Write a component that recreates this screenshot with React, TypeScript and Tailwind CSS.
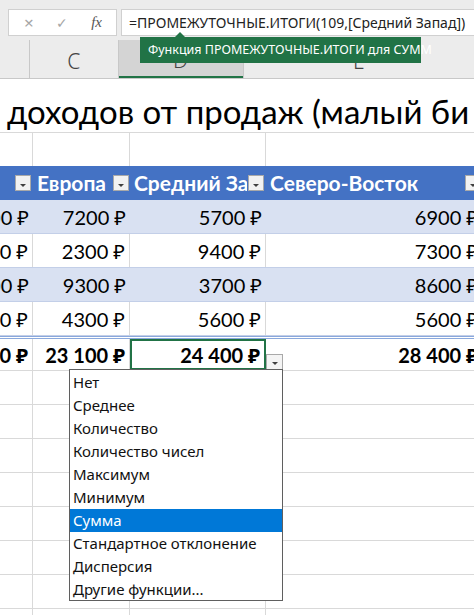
import React from 'react';
import clsx from 'clsx';

const rows = [
  { b: '6100 ₽', c: '7200 ₽', d: '5700 ₽', e: '6900 ₽', band: true },
  { b: '8200 ₽', c: '2300 ₽', d: '9400 ₽', e: '7300 ₽', band: false },
  { b: '5400 ₽', c: '9300 ₽', d: '3700 ₽', e: '8600 ₽', band: true },
  { b: '3800 ₽', c: '4300 ₽', d: '5600 ₽', e: '5600 ₽', band: false },
];

const menuItems = [
  'Нет',
  'Среднее',
  'Количество',
  'Количество чисел',
  'Максимум',
  'Минимум',
  'Сумма',
  'Стандартное отклонение',
  'Дисперсия',
  'Другие функции...',
];

const cols = 'grid grid-cols-[33px_97px_136px_216px] w-[482px]';

function FilterButton() {
  return (
    <div className="w-[16px] h-[16px] shrink-0 bg-[#f2f2f2] border border-[#a9a9a9] flex items-end justify-center pb-[3px]">
      <div className="w-0 h-0 border-l-[3px] border-r-[3px] border-t-[3px] border-l-transparent border-r-transparent border-t-[#404040]" />
    </div>
  );
}

function Cell({ children, className }: { children?: React.ReactNode; className?: string }) {
  return (
    <div className={clsx('flex items-center justify-end overflow-hidden whitespace-nowrap pr-[4px]', className)}>
      {children}
    </div>
  );
}

export default function App() {
  return (
    <div className="relative w-[474px] h-[615px] overflow-hidden bg-white font-['Lato','Noto_Sans',sans-serif] text-black">
      {/* Formula bar */}
      <div className="h-[40px] bg-[#ececec] flex items-start pt-[9px] pl-[8px] gap-[4px] font-['Noto_Sans',sans-serif]">
        <div className="w-[109px] h-[27px] bg-white border border-[#d0d0d0] flex items-center justify-between pl-[15px] pr-[14px]">
          <span className="text-[17px] text-[#a6a6a6] leading-none">×</span>
          <span className="text-[14px] text-[#a6a6a6] leading-none">✓</span>
          <span className="text-[15px] italic text-[#555] leading-none font-['Liberation_Serif',serif]">fx</span>
        </div>
        <div className="flex-1 h-[27px] bg-white border border-[#d0d0d0] border-r-0 flex items-center pl-[7px] text-[14px] text-[#222] whitespace-nowrap overflow-hidden">
          =ПРОМЕЖУТОЧНЫЕ.ИТОГИ(109,[Средний Запад])
        </div>
      </div>

      {/* Column headers */}
      <div className="flex h-[39px] bg-[#ececec] border-b border-[#c8c8c8] font-['Noto_Sans',sans-serif] font-light text-[21px] text-[#444]">
        <div className="w-[33px] border-r border-[#c8c8c8]" />
        <div className="w-[97px] border-r border-[#c8c8c8] flex items-center justify-center pt-[5px]">C</div>
        <div className="w-[136px] bg-[#d4d4d4] border-b-2 border-[#217346] flex items-center justify-center pt-[6px]">D</div>
        <div className="w-[254px] border-l border-[#c8c8c8] flex items-center justify-center pt-[5px]">E</div>
      </div>

      {/* Title row */}
      <div className="h-[54px] border-b border-[#d9d9d9] flex items-end pl-[7px] pb-[4px] whitespace-nowrap text-[33px] leading-none">
        доходов от продаж (малый би
      </div>

      {/* Empty row */}
      <div className={clsx(cols, 'h-[33px]')}>
        <div className="border-r border-[#d9d9d9]" />
        <div className="border-r border-[#d9d9d9]" />
        <div className="border-r border-[#d9d9d9]" />
        <div />
      </div>

      {/* Table header */}
      <div className={clsx(cols, 'h-[34px] bg-[#4472c4] text-white font-bold text-[21px]')}>
        <div className="flex items-center justify-end pr-[2px]">
          <FilterButton />
        </div>
        <div className="flex items-center pl-[4px] pr-[1px] gap-[2px]">
          <span className="flex-1 overflow-hidden whitespace-nowrap">Европа</span>
          <FilterButton />
        </div>
        <div className="flex items-center pl-[4px] pr-[2px] gap-[1px]">
          <span className="flex-1 overflow-hidden whitespace-nowrap">Средний Запад</span>
          <FilterButton />
        </div>
        <div className="flex items-center pl-[4px] pr-[1px] gap-[2px]">
          <span className="flex-1 overflow-hidden whitespace-nowrap">Северо-Восток</span>
          <FilterButton />
        </div>
      </div>

      {/* Data rows */}
      {rows.map((r, i) => (
        <div
          key={i}
          className={clsx(cols, 'h-[34px] border-b border-[#c3cfe8] text-[20px]', r.band ? 'bg-[#d9e1f2]' : 'bg-white')}
        >
          <Cell className={clsx(!r.band && 'border-r border-[#d9d9d9]')}>{r.b}</Cell>
          <Cell className={clsx(!r.band && 'border-r border-[#d9d9d9]')}>{r.c}</Cell>
          <Cell className={clsx(!r.band && 'border-r border-[#d9d9d9]')}>{r.d}</Cell>
          <Cell>{r.e}</Cell>
        </div>
      ))}

      {/* Total row */}
      <div className={clsx(cols, 'h-[34px] border-t-[3px] border-double border-[#8aa8dc] text-[20px] font-bold')}>
        <Cell className="border-r border-[#d9d9d9]">23 500 ₽</Cell>
        <Cell className="border-r border-[#d9d9d9]">23 100 ₽</Cell>
        <Cell className="border-2 border-[#217346] pr-[3px]">24 400 ₽</Cell>
        <Cell>28 400 ₽</Cell>
      </div>

      {/* Empty rows */}
      {Array.from({ length: 8 }).map((_, i) => (
        <div key={i} className={clsx(cols, 'h-[34px] border-t border-[#d9d9d9]')}>
          <div className="border-r border-[#d9d9d9]" />
          <div className="border-r border-[#d9d9d9]" />
          <div className="border-r border-[#d9d9d9]" />
          <div />
        </div>
      ))}

      {/* Tooltip */}
      <div className="absolute left-[140px] top-[37px] h-[26px] w-[281px] bg-[#217346] text-white text-[12.5px] flex items-center pl-[8px] whitespace-nowrap font-['Noto_Sans',sans-serif]">
        <div className="absolute -top-[5px] left-[35px] w-0 h-0 border-l-[5px] border-r-[5px] border-b-[5px] border-l-transparent border-r-transparent border-b-[#217346]" />
        Функция ПРОМЕЖУТОЧНЫЕ.ИТОГИ для СУММ
      </div>

      {/* Subtotal dropdown button */}
      <div className="absolute left-[266px] top-[354px] w-[17px] h-[16px] bg-[#f4f4f4] border border-[#a9a9a9] flex items-end justify-center pb-[4px]">
        <div className="w-0 h-0 border-l-[3px] border-r-[3px] border-t-[3px] border-l-transparent border-r-transparent border-t-[#404040]" />
      </div>

      {/* Subtotal function list */}
      <div className="absolute left-[69px] top-[369px] w-[214px] h-[232px] bg-white border border-[#5f5f5f] pt-[1px] font-['Noto_Sans',sans-serif] text-[15px] text-[#111]">
        {menuItems.map((item) => (
          <div
            key={item}
            className={clsx(
              'h-[23px] flex items-center pl-[3px] whitespace-nowrap',
              item === 'Сумма' && 'bg-[#0078d7] text-white'
            )}
          >
            {item}
          </div>
        ))}
      </div>
    </div>
  );
}
